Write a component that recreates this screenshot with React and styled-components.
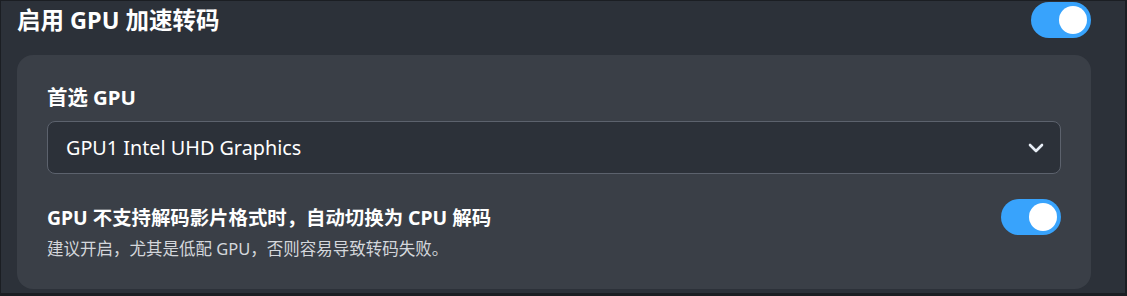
import React, { useState } from "react";
import styled, { createGlobalStyle } from "styled-components";

const GlobalStyle = createGlobalStyle`
  html, body {
    margin: 0;
    padding: 0;
    background: #1b1e23;
  }
  body {
    font-family: "Noto Sans", "Noto Sans CJK SC", sans-serif;
    color: #ffffff;
  }
  * {
    box-sizing: border-box;
  }
`;

const App = () => {
  const [gpuOn, setGpuOn] = useState(true);
  const [fallbackOn, setFallbackOn] = useState(true);

  return (
    <>
      <GlobalStyle />
      <Window>
        <Header>
          <Title>启用 GPU 加速转码</Title>
          <Toggle $on={gpuOn} onClick={() => setGpuOn(!gpuOn)}>
            <Knob $on={gpuOn} />
          </Toggle>
        </Header>

        <Card>
          <FieldLabel>首选 GPU</FieldLabel>
          <Select>
            <span>GPU1 Intel UHD Graphics</span>
            <svg width="16" height="10" viewBox="0 0 16 10" fill="none">
              <polyline
                points="2,2 8,8 14,2"
                stroke="#e8eef6"
                strokeWidth="2.6"
                strokeLinecap="round"
                strokeLinejoin="round"
              />
            </svg>
          </Select>

          <OptionRow>
            <OptionText>
              <OptionTitle>GPU 不支持解码影片格式时，自动切换为 CPU 解码</OptionTitle>
              <OptionHint>建议开启，尤其是低配 GPU，否则容易导致转码失败。</OptionHint>
            </OptionText>
            <Toggle $on={fallbackOn} onClick={() => setFallbackOn(!fallbackOn)}>
              <Knob $on={fallbackOn} />
            </Toggle>
          </OptionRow>
        </Card>
      </Window>
    </>
  );
};

const Window = styled.div`
  margin: 1px 2px 3px 1px;
  height: 292px;
  background: #2c3139;
  padding: 1px 34px 0 16px;
`;

const Header = styled.div`
  display: flex;
  align-items: center;
  justify-content: space-between;
  height: 36px;
`;

const Title = styled.h1`
  margin: 0;
  font-size: 23.5px;
  font-weight: 700;
  line-height: 30px;
`;

const Toggle = styled.div`
  width: 60px;
  height: 36px;
  border-radius: 18px;
  background: ${(p) => (p.$on ? "#38a3fc" : "#5a606b")};
  display: flex;
  align-items: center;
  padding: 0 4px;
  justify-content: ${(p) => (p.$on ? "flex-end" : "flex-start")};
  cursor: pointer;
  flex-shrink: 0;
`;

const Knob = styled.div`
  width: 28px;
  height: 28px;
  border-radius: 50%;
  background: #ffffff;
`;

const Card = styled.section`
  margin-top: 17px;
  background: #3a3f47;
  border-radius: 16px;
  padding: 29px 30px 28px 30px;
`;

const FieldLabel = styled.div`
  font-size: 20.4px;
  font-weight: 700;
  line-height: 26px;
  margin-bottom: 11px;
`;

const Select = styled.div`
  height: 53px;
  border: 1px solid #5c626d;
  border-radius: 8px;
  background: #2c3139;
  display: flex;
  align-items: center;
  justify-content: space-between;
  padding: 0 16px 0 18px;
  font-size: 19.8px;
  color: #ffffff;
  cursor: pointer;
`;

const OptionRow = styled.div`
  display: flex;
  align-items: flex-start;
  justify-content: space-between;
  margin-top: 25px;
`;

const OptionText = styled.div`
  display: flex;
  flex-direction: column;
  padding-top: 6px;
`;

const OptionTitle = styled.div`
  font-size: 19.4px;
  font-weight: 700;
  line-height: 26px;
`;

const OptionHint = styled.div`
  margin-top: 6px;
  font-size: 16.5px;
  line-height: 24px;
  color: #d4d7dc;
`;

export default App;
